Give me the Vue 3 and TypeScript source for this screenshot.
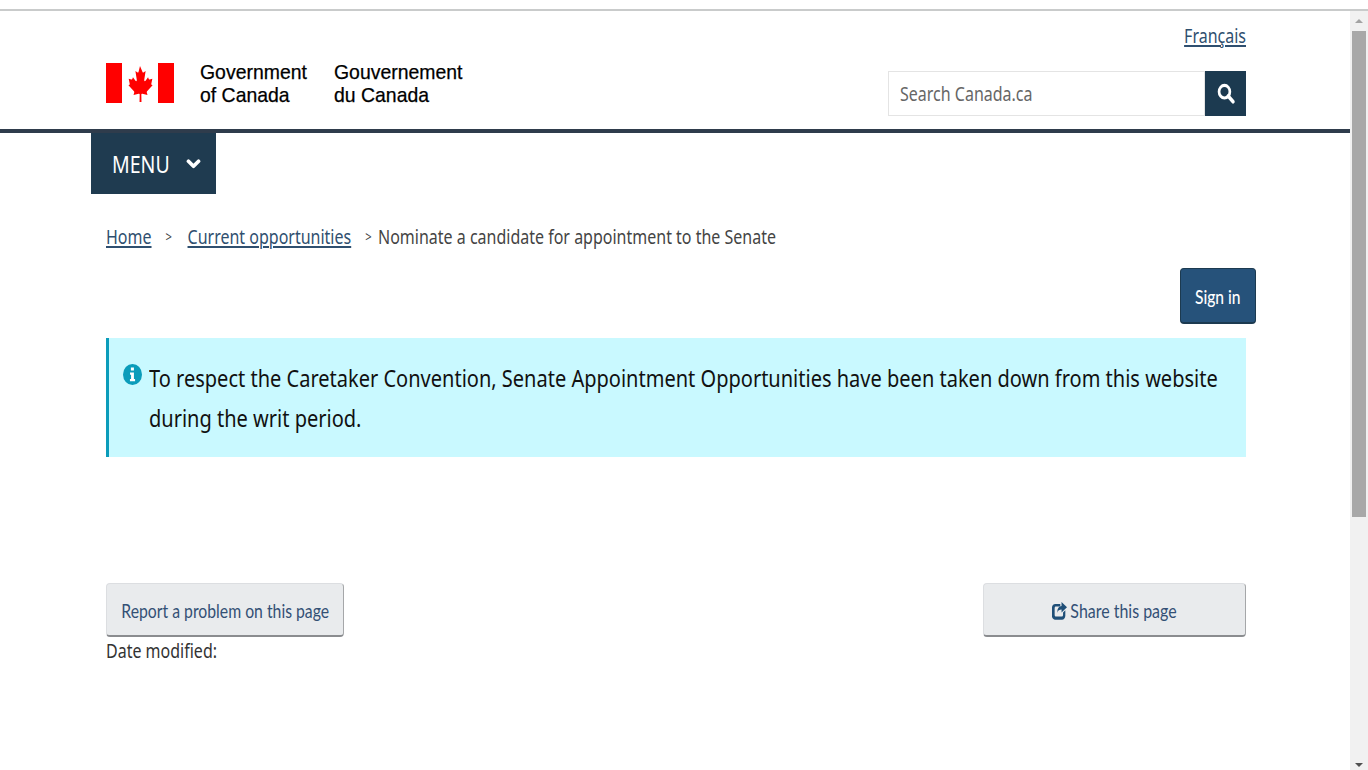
<script setup lang="ts">
const crumbs = [
  { label: 'Home', wide: true },
  { label: 'Current opportunities', wide: false },
]
</script>

<template>
  <div class="page">
    <div class="main">
      <header class="head">
        <div class="lang"><a class="link">Français</a></div>
        <div class="brand-row">
          <div class="brand">
            <svg class="flag" viewBox="0 0 68 40" width="68" height="40">
              <rect x="0" y="0" width="16" height="40" fill="#ff0000" />
              <rect x="52" y="0" width="16" height="40" fill="#ff0000" />
              <path fill="#ff0000" transform="translate(34 0) scale(0.74 0.97) translate(-34 0)" d="M34 3l3.4 6.2c.4.7 1.1.6 1.8.3l2.4-1.2-1.8 8.700c-.4 1.700.8 2.200 1.700 1.200l3.400-3.600.9 2c.3.600.8.500 1.400.4l3.500-.7-1.200 4.400c-.3 1-.5 1.400.2 1.700l1.300.6-7.400 6c-.7.700-.5 1-.2 1.800l.7 2.100-6.900-1.200c-.9-.1-1.400 0-1.400.7l.2 7.800h-2.600l.2-7.800c0-.7-.5-.8-1.400-.7l-6.900 1.200.7-2.100c.3-.8.500-1.100-.2-1.800l-7.400-6 1.300-.6c.7-.3.5-.7.200-1.700l-1.200-4.400 3.500.7c.6.100 1.100.2 1.400-.4l.9-2 3.400 3.600c.9 1 2.100.5 1.700-1.200l-1.800-8.700 2.400 1.200c.7.3 1.400.4 1.800-.3z" />
            </svg>
            <div class="gov"><span>Government</span><span>of Canada</span></div>
            <div class="gov"><span>Gouvernement</span><span>du Canada</span></div>
          </div>
          <div class="search">
            <div class="search-box"><span class="search-text">Search Canada.ca</span></div>
            <div class="search-btn">
              <svg viewBox="0 0 20 20" width="18" height="21" preserveAspectRatio="none">
                <circle cx="8.300" cy="8.300" r="6" fill="none" stroke="#fff" stroke-width="3" />
                <path d="M12.500 12.500l5.300 5.300" stroke="#fff" stroke-width="3.600" stroke-linecap="round" />
              </svg>
            </div>
          </div>
        </div>
      </header>

      <div class="rule"></div>

      <nav class="menu-row">
        <div class="menu">
          <span class="menu-label">MENU</span>
          <svg viewBox="0 0 16 12" width="15" height="11">
            <path d="M2.500 3.500l5.500 5.500 5.500-5.500" fill="none" stroke="#fff" stroke-width="4" stroke-linecap="round" stroke-linejoin="round" />
          </svg>
        </div>
      </nav>

      <div class="content">
        <div class="crumbs">
          <template v-for="c in crumbs" :key="c.label">
            <a class="link">{{ c.label }}</a>
            <span class="sep" :class="{ wide: c.wide }">&gt;</span>
          </template>
          <span class="crumb-last">Nominate a candidate for appointment to the Senate</span>
        </div>

        <div class="signin-row">
          <div class="signin"><span>Sign in</span></div>
        </div>

        <div class="alert">
          <svg class="info" viewBox="0 0 20 20" width="19" height="21" preserveAspectRatio="none">
            <circle cx="10" cy="10" r="10" fill="#0a9cba" />
            <path fill="#fff" d="M8.300 3.300h3.200v2.800H8.300zM7.400 8h4.100v6.200h1.200v2.300H7.300v-2.300h1.200v-3.900H7.400z" />
          </svg>
          <p>To respect the Caretaker Convention, Senate Appointment Opportunities have been taken down from this website during the writ period.</p>
        </div>

        <div class="actions">
          <div class="btn report"><span>Report a problem on this page</span></div>
          <div class="btn share">
            <div class="share-inner">
              <svg viewBox="0 0 18 18" width="18" height="18">
                <path fill="#1f4f78" d="M4 2h6v2.600H4.800c-.9 0-1.500.6-1.500 1.500v7c0 .9.600 1.500 1.500 1.500h7c.9 0 1.500-.6 1.500-1.500V10.500l2.700-2.300v5.500c0 2.300-1.700 4-4 4H4c-2.300 0-4-1.700-4-4V6c0-2.300 1.700-4 4-4z" />
                <path fill="#1f4f78" d="M11.500 0L18 5.200l-6.500 5.300V7.400c-2.600 0-4.400.7-5 3.300-.3-3.900 1.700-6.300 5-6.600z" />
              </svg>
              <span>Share this page</span>
            </div>
          </div>
        </div>
        <div class="modified">Date modified:</div>
      </div>
    </div>

    <aside class="scrollbar">
      <div class="arrow up"></div>
      <div class="thumb"></div>
      <div class="track"></div>
      <div class="arrow down"></div>
    </aside>
  </div>
</template>

<style scoped>
/* the reference is squeezed horizontally, hence the scaleX on the text blocks */
.page {
  height: 770px;
  display: flex;
  flex-direction: column;
  position: relative;
  overflow: hidden;
  background: #fff;
  font-family: "Noto Sans", "Open Sans", sans-serif;
  color: #333;
}
.page::before {
  content: "";
  display: block;
  height: 2px;
  margin-top: 9px;
  background: #c9cbcb;
  flex: none;
}
.main {
  width: 1350px;
  flex: 1;
}
.head {
  padding: 12px 104px 0 106px;
  height: 118px;
  box-sizing: border-box;
}
.lang {
  display: flex;
  justify-content: flex-end;
  font-size: 20px;
  line-height: 26px;
  transform: scaleX(0.8);
  transform-origin: right;
}
.link {
  color: #2f4f6f;
  text-decoration: underline;
  text-underline-offset: 2px;
}
.brand-row {
  display: flex;
  justify-content: space-between;
  margin-top: 9px;
}
.brand {
  display: flex;
  align-items: center;
  height: 56px;
  margin-top: -3px;
}
.flag {
  margin-right: 26px;
}
.gov {
  display: flex;
  flex-direction: column;
  font-family: "Liberation Sans", Arial, sans-serif;
  font-size: 21px;
  line-height: 23px;
  color: #000;
  -webkit-text-stroke: 0.25px #000;
  width: 134px;
  white-space: nowrap;
  transform: scaleX(0.925);
  transform-origin: left;
}
.search {
  display: flex;
  height: 45px;
  margin-top: 13px;
}
.search-box {
  width: 317px;
  height: 45px;
  box-sizing: border-box;
  border: 1px solid #e4e4e4;
  padding-left: 11px;
  display: flex;
  align-items: center;
  font-size: 20px;
  color: #666;
}
.search-text {
  transform: scaleX(0.8);
  transform-origin: left;
  white-space: nowrap;
}
.search-btn {
  width: 41px;
  background: #1c3a50;
  display: flex;
  align-items: center;
  justify-content: center;
}
.rule {
  height: 4px;
  background: #2f3c4c;
}
.menu-row {
  padding-left: 91px;
}
.menu {
  width: 125px;
  height: 61px;
  box-sizing: border-box;
  padding: 0 15px 0 21px;
  background: #1f3b50;
  color: #fff;
  display: flex;
  align-items: center;
  justify-content: space-between;
  font-size: 23px;
}
.menu-label {
  width: 58px;
  transform: scaleX(0.85);
  transform-origin: left;
}
.content {
  padding: 0 104px 0 106px;
}
.crumbs {
  margin-top: 28px;
  display: flex;
  align-items: center;
  width: 125%;
  height: 28px;
  font-size: 20px;
  white-space: nowrap;
  transform: scaleX(0.8);
  transform-origin: left;
}
.sep {
  font-size: 14px;
  margin-left: 17.5px;
  width: 16px;
  color: #444;
}
.sep.wide {
  width: 27.5px;
}
.crumb-last {
  color: #444;
}
.signin-row {
  display: flex;
  justify-content: flex-end;
  margin: 18px -10px 0 0;
}
.signin {
  width: 76px;
  height: 56px;
  padding-top: 2px;
  box-sizing: border-box;
  background: #26527a;
  border: 1px solid #1c3a50;
  border-bottom-width: 2px;
  border-radius: 4px;
  color: #fff;
  display: flex;
  align-items: center;
  justify-content: center;
  font-family: Lato, sans-serif;
  font-size: 19px;
  font-weight: 500;
}
.signin span {
  transform: scaleX(0.82);
  white-space: nowrap;
}
.alert {
  margin-top: 14px;
  height: 119px;
  box-sizing: border-box;
  display: flex;
  align-items: flex-start;
  gap: 7px;
  background: #c9f9ff;
  border-left: 3px solid #0a9cba;
  padding: 20px 0 0 14px;
  color: #111;
}
.info {
  flex: none;
  margin-top: 6px;
}
.alert p {
  margin: 0;
  flex: none;
  width: 1310px;
  font-size: 24px;
  line-height: 40px;
  transform: scaleX(0.834);
  transform-origin: left;
}
.actions {
  margin-top: 126px;
  display: flex;
  justify-content: space-between;
}
.btn {
  height: 54px;
  padding-top: 2px;
  box-sizing: border-box;
  display: flex;
  align-items: center;
  justify-content: center;
  background: #e9ebed;
  border: 1px solid #dcdee1;
  border-bottom: 2px solid #8a8c8f;
  border-right-color: #a5a7a9;
  border-radius: 4px;
  color: #335075;
  font-family: Lato, sans-serif;
  font-size: 19px;
  white-space: nowrap;
}
.report {
  width: 238px;
}
.report span {
  transform: scaleX(0.83);
}
.share {
  width: 263px;
}
.share-inner {
  display: flex;
  align-items: center;
  gap: 4px;
  transform: scaleX(0.84);
}
.modified {
  font-size: 20px;
  line-height: 28px;
  transform: scaleX(0.8);
  transform-origin: left;
}
.scrollbar {
  position: absolute;
  right: 0;
  top: 11px;
  bottom: 0;
  width: 18px;
  background: #f1f1f1;
  display: flex;
  flex-direction: column;
  align-items: center;
}
.thumb {
  width: 14px;
  height: 486px;
  margin-top: 8px;
  background: #a8a8a8;
}
.track {
  flex: 1;
}
.arrow {
  width: 0;
  height: 0;
  border-left: 4px solid transparent;
  border-right: 4px solid transparent;
}
.arrow.up {
  margin-top: 8px;
  border-bottom: 4px solid #a3a3a3;
}
.arrow.down {
  margin-bottom: 3px;
  border-top: 4px solid #505050;
}
</style>

<style>
body {
  margin: 0;
  overflow: hidden;
}
</style>
